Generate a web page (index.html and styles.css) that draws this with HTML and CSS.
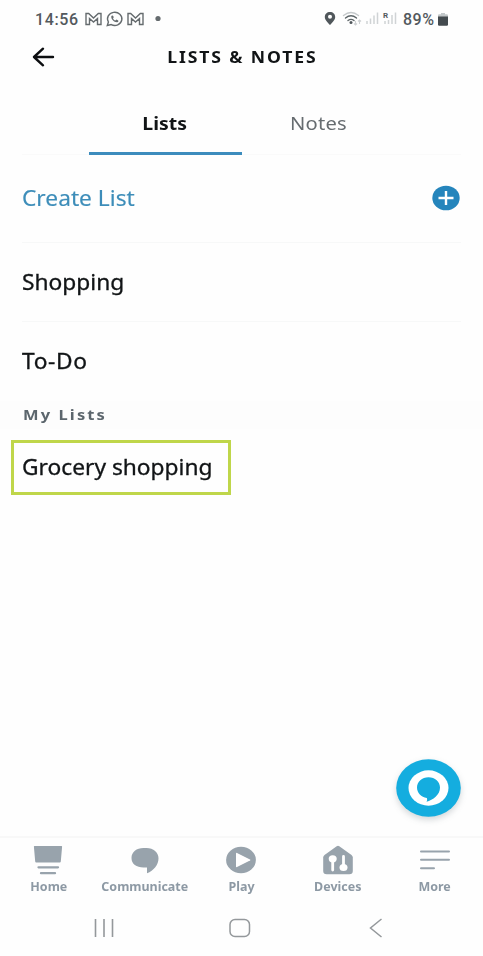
FILE: index.html
```html
<!DOCTYPE html>
<html lang="en">
<head>
<meta charset="utf-8">
<title>Lists &amp; Notes</title>
<link rel="stylesheet" href="styles.css">
</head>
<body>
<div class="screen">
  <div class="status">
    <span class="clock">14:56</span>
    <svg class="notices" width="80" height="20" viewBox="0 0 80 20" fill="none" stroke="#656b6e" stroke-width="1.4">
      <path d="M2 15.500V4.500h2.700l4.800 4.500 4.800-4.500H17v11h-3.500V9.500l-4 3.600-4-3.600v6z"/>
      <path d="M23.300 16.500l1.100-3.500a7.200 6.600 0 1 1 2.800 2.600z"/>
      <path d="M27.600 6.800c-1.400 1.400 1.200 6.600 5.600 6.500 1.300-.4 1.400-1.500 1-1.900l-1.700-.8-1.200 1c-1-.4-1.900-1.300-2.300-2.300l.8-1-.9-1.700z" fill="#656b6e" stroke="none"/>
      <path d="M44 15.500V4.500h2.700l4.800 4.500 4.800-4.500H59v11h-3.500V9.500l-4 3.600-4-3.600v6z"/>
      <circle cx="74" cy="9.500" r="2.600" fill="#656b6e" stroke="none"/>
    </svg>
    <svg class="signals" width="76" height="20" viewBox="0 0 76 20">
      <path fill="#50575b" fill-rule="evenodd" d="M6 3c-3 0-5.200 2.100-5.200 4.900C.8 11 4 13.500 6 16c2-2.500 5.200-5 5.200-8.100C11.200 5.100 9 3 6 3zm0 2.800a2 2 0 1 1 0 4 2 2 0 0 1 0-4z"/>
      <g fill="none" stroke-width="1.400" stroke-linecap="round">
        <path stroke="#c5c9cb" d="M19.500 6.500q7.500-6 15 0"/>
        <path stroke="#5d6568" d="M21.500 9q5.500-4.500 11 0M24 11.500q3-2.300 6 0"/>
      </g>
      <circle cx="27" cy="13.500" r="1.500" fill="#50575b"/>
      <path stroke="#cdd0d2" stroke-width="1.100" fill="none" d="M31.500 12v4m-1.500-1.500l1.500 1.500 1.500-1.500M35.500 15v-4m-1.500 1.500l1.500-1.500 1.500 1.500"/>
      <path stroke="#d0d3d5" stroke-width="1.500" d="M43 15v-3m3.500 3V9.500m3.500 5.500V6.500m3.500 8.500V3.500M61 15v-3m3.500 3v-4M68 15V6m3.500 9V3.500"/>
    </svg>
    <span class="roaming">R</span>
    <span class="charge">89%</span>
    <svg class="battery" width="10" height="13" viewBox="0 0 10 13"><path fill="#c2c7c9" d="M0 4V2.500Q0 1.300 1.200 1.300H3V0h4v1.300h1.800Q10 1.300 10 2.500V4z"/><path fill="#444b4f" d="M0 3.500h10v8q0 1.200-1.200 1.200H1.200Q0 12.700 0 11.500z"/></svg>
  </div>

  <header class="header">
    <svg class="back" width="24" height="20" viewBox="0 0 24 20" fill="none" stroke="#0c0e10" stroke-width="2.400" stroke-linecap="round" stroke-linejoin="round"><path d="M21 10H2M11 1.700L2 10l9 8.300"/></svg>
    <h1>LISTS &amp; NOTES</h1>
  </header>

  <nav class="tabs">
    <a class="tab active"><span>Lists</span></a>
    <a class="tab"><span>Notes</span></a>
  </nav>

  <main class="content">
    <div class="row create">
      <span class="label">Create List</span>
      <svg width="28" height="26" viewBox="0 0 28 26"><ellipse cx="14" cy="13" rx="13.700" ry="12.300" fill="#2585bc"/><path d="M6.500 13h15M14 6v14" stroke="#fff" stroke-width="2.400"/></svg>
    </div>
    <div class="row"><span class="label">Shopping</span></div>
    <div class="row last"><span class="label todo">To-Do</span></div>
    <h2 class="section"><span>My Lists</span></h2>
    <div class="highlight"><span class="label">Grocery shopping</span></div>
  </main>

  <button class="assistant" aria-label="Alexa">
    <svg width="65" height="58" viewBox="0 0 65 58"><ellipse cx="32.500" cy="29" rx="32.300" ry="28.700" fill="#14addf"/><ellipse cx="32.500" cy="29" rx="20" ry="17.700" fill="#fff"/><path fill="#14addf" d="M32.500 18.300c6.500 0 11.500 4.500 11.500 10.200 0 7.500-7 12.500-13.500 14.300.8-1.700.8-2.700.3-3.800-5.600-.6-9.800-5.100-9.800-10.500 0-5.700 5-10.200 11.500-10.200z"/></svg>
  </button>

  <nav class="bottom">
    <a class="item">
      <svg width="32" height="32" viewBox="0 0 32 32"><path fill="#98a3ac" d="M2.500 2h27q.7 0 .6.800l-1.300 14.700q-.1 1-1 1H4.200q-.9 0-1-1L1.900 2.800Q1.800 2 2.500 2z"/><path d="M6.500 23.300h19.500M9 29.200h14" stroke="#98a3ac" stroke-width="2.300" stroke-linecap="round"/></svg>
      <span>Home</span>
    </a>
    <a class="item">
      <svg width="32" height="32" viewBox="0 0 32 32"><path fill="#98a3ac" d="M14.500 4h3C24.500 4 29.500 8.400 29.500 14.200c0 6.800-4.700 12.200-11.500 15.100V23.500h-3.500C7.500 23.500 2.500 20 2.500 14S7.500 4 14.500 4z"/></svg>
      <span>Communicate</span>
    </a>
    <a class="item">
      <svg width="32" height="32" viewBox="0 0 32 32"><ellipse cx="16" cy="16" rx="14.900" ry="13.200" fill="#98a3ac"/><path fill="#fff" d="M11 9.500q0-1 1-.6l13 6.500q1 .6 0 1.200l-13 6.500q-1 .4-1-.6z"/></svg>
      <span>Play</span>
    </a>
    <a class="item">
      <svg width="32" height="32" viewBox="0 0 32 32"><path fill="#98a3ac" d="M14.700 2.300q1.300-.9 2.600 0L29.500 11q1.300 1 1.300 2.500V27q0 3.200-3.500 3.200H4.700Q1.200 30.200 1.200 27V13.500q0-1.500 1.300-2.500z"/><ellipse cx="10.700" cy="14.800" rx="4" ry="3.600" fill="#fff"/><ellipse cx="21.500" cy="23.500" rx="4" ry="3.600" fill="#fff"/><path d="M10.700 15v11M21.500 23.500V12.500" stroke="#fff" stroke-width="2.800" stroke-linecap="round"/></svg>
      <span>Devices</span>
    </a>
    <a class="item">
      <svg width="32" height="32" viewBox="0 0 32 32"><path d="M2 7.500h28M2 15.700h28M2 24.300h13" stroke="#98a3ac" stroke-width="2" stroke-linecap="round"/></svg>
      <span>More</span>
    </a>
  </nav>

  <div class="system">
    <svg width="22" height="20" viewBox="0 0 22 20"><path d="M2.500 1v18M11 1v18M19.500 1v18" stroke="#94989b" stroke-width="1.600"/></svg>
    <svg width="22" height="20" viewBox="0 0 22 20"><rect x="1" y="1.500" width="19.500" height="17" rx="5" fill="none" stroke="#94989b" stroke-width="1.500"/></svg>
    <svg width="22" height="20" viewBox="0 0 22 20"><path d="M17.500 1L6.500 10l11 9" fill="none" stroke="#94989b" stroke-width="1.500"/></svg>
  </div>
</div>
</body>
</html>
```
FILE: styles.css
```css
* { box-sizing: border-box; }
body { margin: 0; background: #fefefe; font-family: "Noto Sans", "Open Sans", sans-serif; color: #111416; }
h1, h2 { margin: 0; }
svg { display: block; flex: none; }
.screen { position: relative; width: 483px; height: 956px; display: flex; flex-direction: column; overflow: hidden; background: #fefefe; }

.status { height: 38px; flex: none; display: flex; align-items: center; padding: 0 35px; position: relative; font-family: Roboto, sans-serif; color: #53595d; }
.clock { width: 49px; font-size: 16px; letter-spacing: .6px; font-weight: 500; white-space: nowrap; }
.signals { margin-left: 160px; }
.charge { width: 34px; margin-left: 3px; font-size: 16px; font-weight: 500; letter-spacing: .5px; }
.battery { margin-left: 1px; }
.roaming { position: absolute; left: 383px; top: 11px; font-size: 8px; line-height: 10px; font-weight: 700; }

.header { height: 38px; flex: none; display: flex; align-items: center; justify-content: center; position: relative; }
.back { position: absolute; left: 32px; top: 9px; }
.header h1 { padding-left: 2px; font-size: 16px; line-height: 20px; font-weight: 700; letter-spacing: 1.7px; transform: scaleX(1.1); }

.tabs { height: 79px; flex: none; display: grid; grid-template-columns: 153px 153px; justify-content: center; margin: 0 22px; padding-top: 18px; border-bottom: 1px solid #fafafa; }
.tab { display: flex; justify-content: center; padding-top: 17px; border-bottom: 3px solid transparent; font-size: 18px; line-height: 25px; color: #666c70; letter-spacing: .2px; }
.tab span { display: inline-block; height: 25px; transform: scaleX(1.12); }
.active { color: #111416; font-weight: 700; letter-spacing: 0; border-color: #3c8cbd; position: relative; top: 1px; }
.active span { margin-top: -1px; transform: scaleX(1.08); }

.content { flex: 1; }
.row { height: 79px; margin: 0 22px; display: flex; align-items: center; justify-content: space-between; border-bottom: 1px solid #f7f8f8; font-size: 21px; line-height: 28px; }
.label { display: inline-block; white-space: nowrap; transform: scaleX(1.083); transform-origin: left center; -webkit-text-stroke: .3px; }
.create { height: 88px; color: #3d8db9; padding: 0 1px 1px 0; }
.create .label { -webkit-text-stroke: .15px; }
.last { border: 0; padding-bottom: 2px; }
.todo { letter-spacing: .6px; }
.section { height: 28px; padding: 0 0 2px 23px; display: flex; align-items: center; background: #fdfdfd; font-size: 15px; line-height: 20px; letter-spacing: 1.9px; color: #5c666d; font-weight: 700; }
.section span { margin-top: -1px; transform: scaleX(1.1); transform-origin: left center; }
.highlight { width: 220px; height: 55px; margin: 11px 0 0 11px; padding: 0 0 2px 8px; border: 3px solid #bfd64a; display: flex; align-items: center; font-size: 21px; line-height: 28px; }

.assistant { position: absolute; right: 22px; top: 759px; padding: 0; border: 0; background: none; filter: drop-shadow(0 3px 3px rgba(40, 60, 70, .2)); }

.bottom { flex: none; height: 64px; border-top: 2px solid #f8f8f8; display: grid; grid-template-columns: repeat(5, 96.600px); }
.item { display: flex; flex-direction: column; align-items: center; padding-top: 6px; color: #8d99a4; font-size: 12px; line-height: 18px; font-weight: 700; }
.item span { margin-top: 2px; transform: scaleX(1.04); }
.system { flex: none; height: 56px; padding: 0 97px 0 93px; display: flex; align-items: center; justify-content: space-between; }
```
